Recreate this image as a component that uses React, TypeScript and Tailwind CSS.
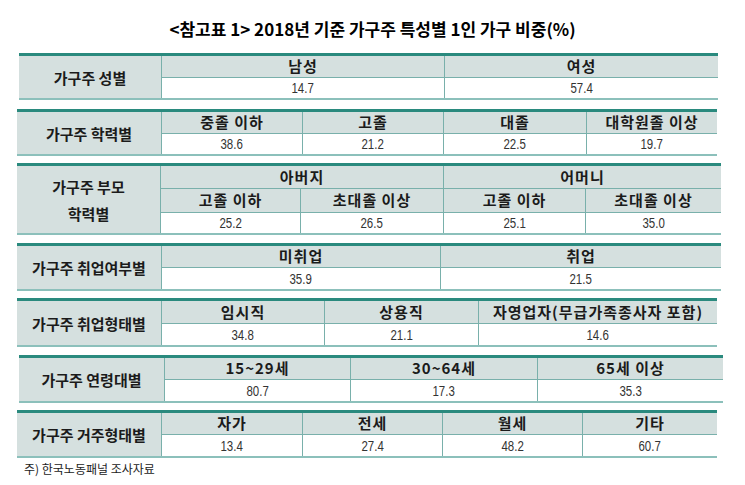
const KR = "font-['Noto_Sans_CJK_KR','Noto_Sans',sans-serif]";
const NUM = "font-['Liberation_Sans_Narrow','Liberation_Sans',sans-serif]";

const head = `bg-[#d5e0df] border-b border-[#79b0ab] flex items-center justify-center text-[15px] font-bold text-[#1b1b1b] tracking-[1px] ${KR}`;
const val = `bg-white flex items-center justify-center text-[14px] text-[#333] ${NUM}`;
const label = `bg-[#d5e0df] border-r border-[#79b0ab] flex flex-col items-center justify-center text-[15px] font-bold text-[#1b1b1b] leading-[27px] ${KR}`;
const line = "border-r border-[#79b0ab]";
const frame = "grid border-t-[3px] border-b-2 border-t-[#2a8a7e] border-b-[#8cc0bb]";

// numbers in the reference are set in a narrow face
function Num({ v }: { v: string }) {
  return <span className="inline-block scale-x-[0.82] pt-px">{v}</span>;
}

function Two({
  labelText,
  headers,
  values,
  cls,
}: {
  labelText: string;
  headers: string[];
  values: string[];
  cls: string;
}) {
  const last = headers.length - 1;
  return (
    <div className={`${frame} ${cls}`}>
      <div className={`${label} row-span-2`}>{labelText}</div>
      {headers.map((h, i) => (
        <div key={h} className={`${head} ${i < last ? line : ""}`}>
          {h}
        </div>
      ))}
      {values.map((v, i) => (
        <div key={i} className={`${val} ${i < last ? line : ""}`}>
          <Num v={v} />
        </div>
      ))}
    </div>
  );
}

export default function App() {
  return (
    <div className="w-[745px] h-[485px] bg-white">
      <div
        className={`h-[53px] pt-[5px] flex items-center justify-center text-[17px] font-bold text-black ${KR}`}
      >
        &lt;참고표 1&gt; 2018년 기준 가구주 특성별 1인 가구 비중(%)
      </div>

      <Two
        labelText="가구주 성별"
        headers={["남성", "여성"]}
        values={["14.7", "57.4"]}
        cls="ml-[19px] w-[699px] grid-cols-[143px_283px_273px] grid-rows-[22px_20px]"
      />

      <Two
        labelText="가구주 학력별"
        headers={["중졸 이하", "고졸", "대졸", "대학원졸 이상"]}
        values={["38.6", "21.2", "22.5", "19.7"]}
        cls="mt-[9px] ml-[17px] w-[700px] grid-cols-[145px_141px_141px_143px_130px] grid-rows-[22px_20px]"
      />

      {/* 부모 학력별: two-level header */}
      <div
        className={`${frame} mt-[7px] ml-[17px] w-[704px] grid-cols-[144px_140px_143px_142px_135px] grid-rows-[23px_24px_20px]`}
      >
        <div className={`${label} row-span-3`}>
          <span>가구주 부모</span>
          <span>학력별</span>
        </div>
        <div className={`${head} ${line} col-span-2`}>아버지</div>
        <div className={`${head} col-span-2`}>어머니</div>
        <div className={`${head} ${line}`}>고졸 이하</div>
        <div className={`${head} ${line}`}>초대졸 이상</div>
        <div className={`${head} ${line}`}>고졸 이하</div>
        <div className={head}>초대졸 이상</div>
        <div className={`${val} ${line}`}>
          <Num v="25.2" />
        </div>
        <div className={`${val} ${line}`}>
          <Num v="26.5" />
        </div>
        <div className={`${val} ${line}`}>
          <Num v="25.1" />
        </div>
        <div className={val}>
          <Num v="35.0" />
        </div>
      </div>

      <Two
        labelText="가구주 취업여부별"
        headers={["미취업", "취업"]}
        values={["35.9", "21.5"]}
        cls="mt-[8px] ml-[17px] w-[704px] grid-cols-[145px_279px_280px] grid-rows-[22px_21px]"
      />

      <Two
        labelText="가구주 취업형태별"
        headers={["임시직", "상용직", "자영업자(무급가족종사자 포함)"]}
        values={["34.8", "21.1", "14.6"]}
        cls="mt-[7px] ml-[17px] w-[700px] grid-cols-[145px_163px_154px_238px] grid-rows-[23px_21px]"
      />

      <Two
        labelText="가구주 연령대별"
        headers={["15~29세", "30~64세", "65세 이상"]}
        values={["80.7", "17.3", "35.3"]}
        cls="mt-[8px] ml-[19px] w-[704px] grid-cols-[146px_186px_187px_185px] grid-rows-[22px_21px]"
      />

      <Two
        labelText="가구주 거주형태별"
        headers={["자가", "전세", "월세", "기타"]}
        values={["13.4", "27.4", "48.2", "60.7"]}
        cls="mt-[7px] ml-[17px] w-[700px] grid-cols-[145px_141px_140px_140px_134px] grid-rows-[22px_21px]"
      />

      <div className={`mt-[3px] ml-[24px] text-[12px] text-[#222] leading-[16px] ${KR}`}>
        주) 한국노동패널 조사자료
      </div>
    </div>
  );
}
